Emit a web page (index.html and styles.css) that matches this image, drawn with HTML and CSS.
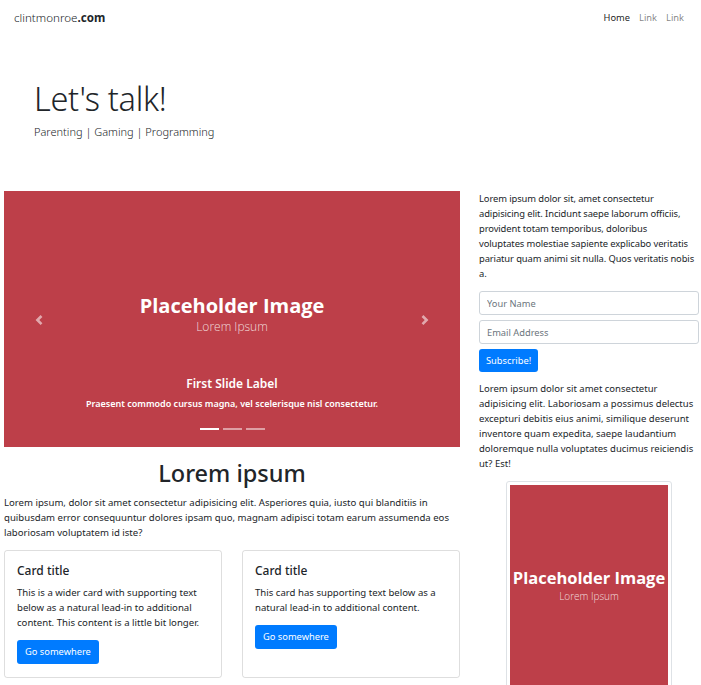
FILE: index.html
```html
<!DOCTYPE html>
<html>
<head>
<meta charset="utf-8">
<link rel="stylesheet" href="styles.css">
</head>
<body>
<nav class="navbar">
  <a class="brand"><span class="brand-light">clintmonroe</span><b>.com</b></a>
  <ul class="nav">
    <li class="active">Home</li>
    <li>Link</li>
    <li>Link</li>
  </ul>
</nav>
<header class="jumbo">
  <h1 class="display">Let's talk!</h1>
  <p class="lead">Parenting | Gaming | Programming</p>
</header>
<main class="row">
  <section class="left">
    <div class="carousel">
      <div class="ph">
        <div class="ph-title">Placeholder Image</div>
        <div class="ph-sub">Lorem Ipsum</div>
      </div>
      <span class="ctrl prev"><svg width="10" height="12" viewBox="0 0 8 8"><path fill="#fff" d="M5.25 0l-4 4 4 4 1.5-1.5L4.25 4l2.5-2.5L5.25 0z"/></svg></span>
      <span class="ctrl next"><svg width="10" height="12" viewBox="0 0 8 8"><path fill="#fff" d="M2.75 0l-1.5 1.5L3.75 4l-2.5 2.5L2.75 8l4-4-4-4z"/></svg></span>
      <div class="caption">
        <h5>First Slide Label</h5>
        <p>Praesent commodo cursus magna, vel scelerisque nisl consectetur.</p>
      </div>
      <ol class="indicators"><li class="on"></li><li></li><li></li></ol>
    </div>
    <h2 class="section-title">Lorem ipsum</h2>
    <p class="text">Lorem ipsum, dolor sit amet consectetur adipisicing elit. Asperiores quia, iusto qui blanditiis in quibusdam error consequuntur dolores ipsam quo, magnam adipisci totam earum assumenda eos laboriosam voluptatem id iste?</p>
    <div class="cards">
      <div class="card">
        <h5 class="card-title">Card title</h5>
        <p class="text">This is a wider card with supporting text below as a natural lead-in to additional content. This content is a little bit longer.</p>
        <a class="btn">Go somewhere</a>
      </div>
      <div class="card">
        <h5 class="card-title">Card title</h5>
        <p class="text">This card has supporting text below as a natural lead-in to additional content.</p>
        <a class="btn">Go somewhere</a>
      </div>
    </div>
  </section>
  <aside class="right">
    <p class="text intro">Lorem ipsum dolor sit, amet consectetur adipisicing elit. Incidunt saepe laborum officiis, provident totam temporibus, doloribus<br>voluptates molestiae sapiente explicabo veritatis pariatur quam animi sit nulla. Quos veritatis nobis a.</p>
    <form class="form">
      <input class="input" placeholder="Your Name">
      <input class="input" placeholder="Email Address">
      <a class="btn small">Subscribe!</a>
    </form>
    <p class="text">Lorem ipsum dolor sit amet consectetur adipisicing elit. Laboriosam a possimus delectus excepturi debitis eius animi, similique deserunt inventore quam expedita, saepe laudantium doloremque nulla voluptates ducimus reiciendis ut? Est!</p>
    <div class="thumb">
      <div class="ph tall">
        <div class="ph-title">Placeholder Image</div>
        <div class="ph-sub">Lorem Ipsum</div>
      </div>
    </div>
  </aside>
</main>
</body>
</html>
```

FILE: styles.css
```css
* { box-sizing: border-box; }
html, body { margin: 0; padding: 0; }
body {
  font-family: "Noto Sans", "Open Sans", sans-serif;
  font-size: 9.6px;
  line-height: 15px;
  color: #212529;
  background: #fff;
  overflow: hidden;
}
.navbar {
  display: flex;
  justify-content: space-between;
  align-items: center;
  padding: 10px 17px 9px 14px;
}
.brand { font-size: 11.6px; color: #212529; }
.brand-light { font-weight: 300; }
.brand b { font-weight: 700; }
.nav { list-style: none; margin: 0; padding: 0; display: flex; gap: 9px; }
.nav li { color: rgba(0,0,0,.5); font-size: 9.3px; }
.nav li.active { color: rgba(0,0,0,.9); }
.jumbo { padding: 44px 34px 50px; }
.display {
  margin: 0;
  font-size: 32.5px;
  font-weight: 300;
  line-height: 41px;
  letter-spacing: -0.3px;
}
.lead { margin: 4px 0 0; font-size: 11px; font-weight: 300; line-height: 18px; }
.row { display: flex; gap: 19px; padding: 0 2px 0 4px; }
.left { width: 456px; flex: none; }
.right { flex: 1; font-size: 9.5px; }
.right .intro { font-size: 9.4px; letter-spacing: -0.1px; }
.carousel {
  position: relative;
  height: 256px;
  background: #bd3f49;
  display: flex;
  flex-direction: column;
  align-items: center;
}
.ph {
  background: #bd3f49;
  color: #fff;
  text-align: center;
  display: flex;
  flex-direction: column;
  justify-content: center;
  align-items: center;
  font-family: "Open Sans", sans-serif;
  white-space: nowrap;
}
.carousel .ph { padding-top: 104px; }
.ph-title { font-size: 20px; font-weight: 700; line-height: 22px; }
.ph-sub { margin-top: 2px; font-size: 12px; font-weight: 300; line-height: 16px; color: rgba(255,255,255,.8); }
.ctrl { position: absolute; top: 123px; opacity: .55; }
.prev { left: 30px; }
.next { right: 30px; }
.caption { position: absolute; left: 0; right: 0; top: 185px; text-align: center; color: #fff; }
.caption h5 { margin: 0 0 5px; font-size: 12px; font-weight: 600; line-height: 16px; }
.caption p { margin: 0; font-size: 9px; font-weight: 600; line-height: 14px; }
.indicators {
  position: absolute; top: 237px; left: 0; right: 0;
  list-style: none; margin: 0; padding: 0;
  display: flex; justify-content: center; gap: 4px;
}
.indicators li { width: 19px; height: 2px; background: rgba(255,255,255,.5); }
.indicators li.on { background: #fff; }
.section-title {
  margin: 11px 0 7px;
  text-align: center;
  font-size: 23.5px;
  font-weight: 500;
  line-height: 30px;
}
.text { margin: 0 0 10px; }
.cards { display: flex; gap: 20px; margin-top: 0; }
.card {
  flex: 1;
  border: 1px solid rgba(0,0,0,.13);
  border-radius: 3px;
  padding: 12px 12px 12px;
  align-self: flex-start;
  height: 128px;
}
.card-title { margin: 0 0 7px; font-size: 12px; font-weight: 500; line-height: 15px; }
.card .text { margin-bottom: 10px; }
.btn {
  display: inline-block;
  background: #007bff;
  color: #fff;
  border-radius: 3px;
  padding: 5px 8px 5px;
  line-height: 14px;
  font-size: 9.3px;
}
.right > .text:first-child { margin-top: 0; }
.form { display: flex; flex-direction: column; align-items: flex-start; gap: 5px; margin: 0 0 9px; }
.input {
  width: 100%;
  height: 24px;
  border: 1px solid #ced4da;
  border-radius: 3px;
  padding: 0 7px;
  font: inherit;
  font-size: 9.3px;
  letter-spacing: 0;
  color: #495057;
}
.input::placeholder { color: #6c757d; }
.btn.small { padding: 5px 7px 4px; }
.thumb {
  width: 166px;
  margin: 0 auto;
  border: 1px solid #dee2e6;
  border-radius: 3px;
  padding: 3px;
}
.ph.tall { height: 210px; padding-bottom: 8px; }
.ph.tall .ph-title { font-size: 16.5px; line-height: 18px; }
.ph.tall .ph-sub { font-size: 10px; line-height: 14px; }
```
